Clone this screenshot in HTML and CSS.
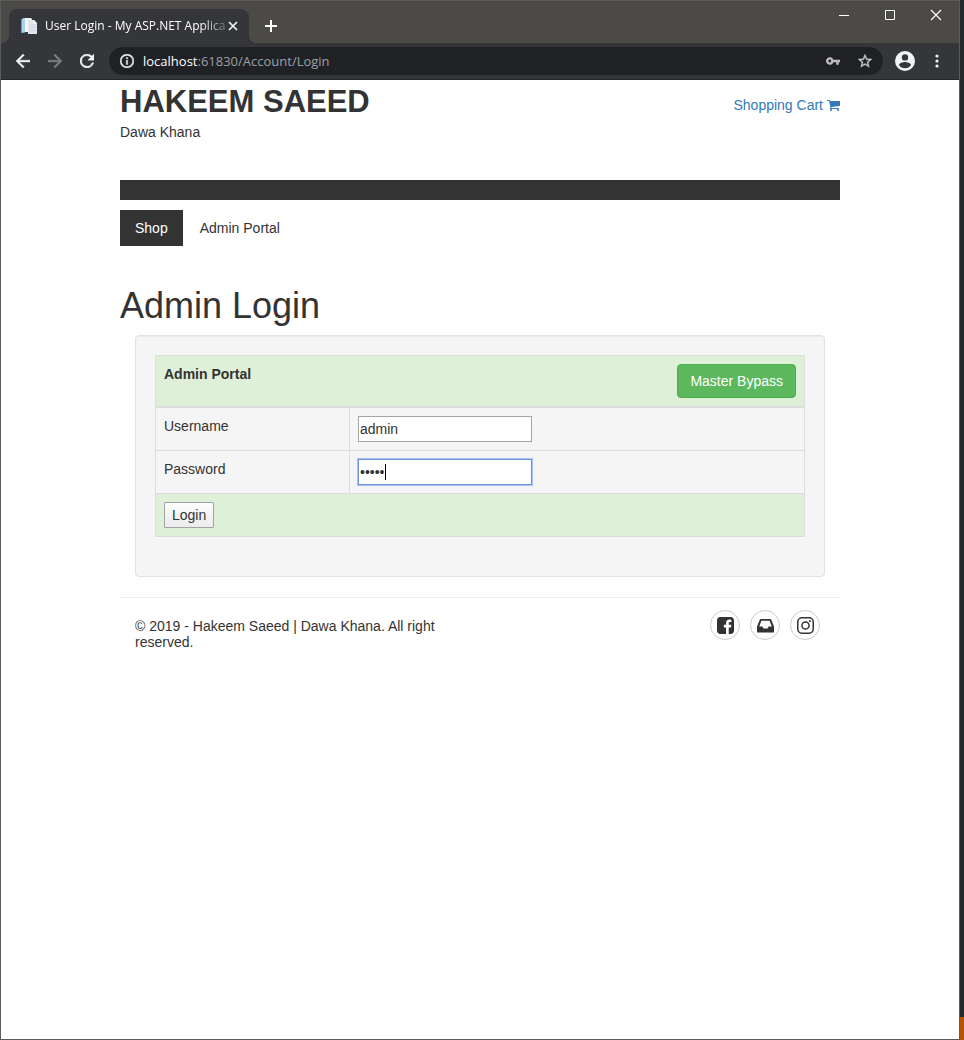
FILE: index.html
```html
<!DOCTYPE html>
<html lang="en">
<head>
<meta charset="utf-8">
<title>User Login - My ASP.NET Application</title>
<link rel="stylesheet" href="styles.css">
</head>
<body>
<div class="window">
  <div class="titlebar">
    <div class="tab">
      <svg class="favicon" viewBox="0 0 16 16" width="16" height="16"><path d="M2 0h8l1 1v13H2z" fill="#eef1f4"/><path d="M0 1l4-.6v14.2L0 15z" fill="#4f9bd3"/><path d="M1 1.200l3-.5V14.300l-3 .4z" fill="#a9d3ef"/><path d="M4 .5h3V14H4z" fill="#f4f6f8"/><path d="M7 2h6l3 3v11H7z" fill="#e2e6ec"/><path d="M12.500 2v3.500H16z" fill="#fff"/><path d="M8.500 7h6M8.500 9.500h6M8.500 12h6" stroke="#cdd3db"/></svg>
      <span class="tab-title">User Login - My ASP.NET Applica</span>
      <button class="plain tab-close" aria-label="Close tab"><svg viewBox="0 0 10 10" width="10" height="10"><path d="M1 1l8 8M9 1L1 9" stroke="#f1f3f4" stroke-width="1.700"/></svg></button>
    </div>
    <button class="plain new-tab" aria-label="New tab"><svg viewBox="0 0 12 12" width="12" height="12"><path d="M6 0v12M0 6h12" stroke="#fff" stroke-width="2"/></svg></button>
    <div class="window-controls">
      <button class="plain" aria-label="Minimize"><svg viewBox="0 0 12 12" width="12" height="12"><path d="M1 6.500h10" stroke="#fff"/></svg></button>
      <button class="plain" aria-label="Maximize"><svg viewBox="0 0 12 12" width="12" height="12"><path d="M1.500 1.500h9v9h-9z" fill="none" stroke="#fff"/></svg></button>
      <button class="plain" aria-label="Close"><svg viewBox="0 0 12 12" width="12" height="12"><path d="M1 1l10 10M11 1L1 11" stroke="#fff" stroke-width="1.200"/></svg></button>
    </div>
  </div>
  <div class="toolbar">
    <button class="plain" aria-label="Back"><svg viewBox="4 4 16 16" width="14" height="14"><path d="M20 11H7.830l5.590-5.590L12 4l-8 8 8 8 1.410-1.410L7.830 13H20z" fill="#f1f3f4" stroke="#f1f3f4" stroke-width=".5"/></svg></button>
    <button class="plain" aria-label="Forward"><svg viewBox="4 4 16 16" width="14" height="14"><path d="M12 4l-1.410 1.410L16.170 11H4v2h12.170l-5.580 5.590L12 20l8-8z" fill="#7d7f82" stroke="#7d7f82" stroke-width=".5"/></svg></button>
    <button class="plain" aria-label="Reload"><svg viewBox="4 4 16 16" width="14" height="14"><path d="M17.650 6.350A8 8 0 1 0 19.730 14h-2.080A6 6 0 1 1 12 6c1.660 0 3.140.690 4.220 1.780L13 11h7V4z" fill="#f1f3f4" stroke="#f1f3f4" stroke-width=".5"/></svg></button>
    <div class="omnibox">
      <svg viewBox="2 2 20 20" width="14" height="14"><path d="M11 7h2v2h-2zm0 4h2v6h-2zm1-9a10 10 0 1 0 0 20 10 10 0 0 0 0-20zm0 18a8 8 0 1 1 0-16 8 8 0 0 1 0 16z" fill="#e8eaed" stroke="#e8eaed" stroke-width=".6"/></svg>
      <span class="url"><span class="host">localhost</span>:61830/Account/Login</span>
      <button class="plain" aria-label="Saved password"><svg viewBox="1 6 22 12" width="14" height="8"><path d="M12.650 10A6 6 0 1 0 12.650 14H17v4h4v-4h2v-4zM7 14.200a2.200 2.200 0 1 1 0-4.400 2.200 2.200 0 0 1 0 4.400z" fill="#bdbdbd"/></svg></button>
      <button class="plain star" aria-label="Bookmark"><svg viewBox="2 2 20 20" width="14" height="14"><path d="M22 9.240l-7.190-.620L12 2 9.190 8.630 2 9.240l5.460 4.730L5.820 21 12 17.270 18.180 21l-1.630-7.030zM12 15.400l-3.760 2.270 1-4.280-3.320-2.880 4.380-.380L12 6.100l1.710 4.040 4.380.380-3.320 2.880 1 4.280z" fill="#c8cacc" stroke="#c8cacc" stroke-width=".5"/></svg></button>
    </div>
    <button class="plain avatar" aria-label="Profile"><svg viewBox="2 2 20 20" width="20" height="20"><path d="M12 2a10 10 0 1 0 0 20 10 10 0 0 0 0-20zm0 3.200a3.200 3.200 0 1 1 0 6.400 3.200 3.200 0 0 1 0-6.400zm0 14a7.200 7.200 0 0 1-6-3.220c.030-1.990 4-3.080 6-3.080s5.970 1.090 6 3.080a7.200 7.200 0 0 1-6 3.220z" fill="#f1f3f4"/></svg></button>
    <button class="plain" aria-label="Menu"><svg viewBox="0 0 4 14" width="4" height="14"><g fill="#f1f3f4"><circle cx="2" cy="2" r="1.600"/><circle cx="2" cy="7" r="1.600"/><circle cx="2" cy="12" r="1.600"/></g></svg></button>
  </div>

  <div class="page">
    <header class="site-header">
      <div>
        <div class="brand">HAKEEM SAEED</div>
        <div>Dawa Khana</div>
      </div>
      <a class="cart" href="#">Shopping Cart <svg viewBox="0 0 1664 1408" width="13" height="11"><path d="M640 1280a128 128 0 1 1-256 0 128 128 0 0 1 256 0zm896 0a128 128 0 1 1-256 0 128 128 0 0 1 256 0zm128-1088v512q0 24-16 42t-41 21L563 889q13 60 13 70 0 16-24 64h920q26 0 45 19t19 45-19 45-45 19H448q-26 0-45-19t-19-45q0-11 8-31t16-36 21-40 15-29L267 128H64q-26 0-45-19T0 64t19-45T64 0h256q16 0 28 6t20 16 12 24 8 26 5 29 5 27h1202q26 0 45 19t19 45z" fill="currentColor"/></svg></a>
    </header>
    <div class="bar"></div>
    <nav class="nav">
      <a class="active" href="#">Shop</a>
      <a href="#">Admin Portal</a>
    </nav>
    <h1>Admin Login</h1>
    <form class="well">
      <table>
        <thead>
          <tr><th colspan="2"><div class="head-row"><span>Admin Portal</span><button type="button" class="bypass">Master Bypass</button></div></th></tr>
        </thead>
        <tbody>
          <tr><td class="label"><label for="user">Username</label></td><td><input id="user" type="text" value="admin"></td></tr>
          <tr><td class="label"><label for="pass">Password</label></td><td><div class="field"><input id="pass" class="focused" type="password" value="admin"><span class="caret"></span></div></td></tr>
          <tr class="success"><td colspan="2"><button type="button" class="login">Login</button></td></tr>
        </tbody>
      </table>
    </form>
    <footer>
      <p>© 2019 - Hakeem Saeed | Dawa Khana. All right reserved.</p>
      <div class="social">
        <a href="#" aria-label="Facebook"><svg viewBox="0 0 1536 1536" width="17" height="17"><path d="M1248 0q119 0 203.500 84.500T1536 288v960q0 119-84.500 203.500T1248 1536h-188V941h199l30-232h-229V561q0-56 23.500-84t91.500-28l122-1V241q-63-9-178-9-136 0-217.500 80T820 538v171H620v232h200v595H288q-119 0-203.500-84.500T0 1248V288Q0 169 84.500 84.500T288 0z" fill="#333"/></svg></a>
        <a href="#" aria-label="Inbox"><svg viewBox="0 0 18 18" width="17" height="17"><path fill-rule="evenodd" d="M4 2h10q.8 0 1.100.8L18 10v5.500q0 1-1 1H1q-1 0-1-1V10l2.900-7.200Q3.200 2 4 2zm.7 2L2.400 10h3.300l1.100 2.200h4.400L12.300 10h3.300l-2.300-6z" fill="#333"/></svg></a>
        <a href="#" aria-label="Instagram"><svg viewBox="0 0 18 18" width="17" height="17"><rect x=".8" y=".8" width="16.400" height="16.400" rx="4.500" fill="none" stroke="#333" stroke-width="1.600"/><circle cx="9" cy="9" r="3.800" fill="none" stroke="#333" stroke-width="1.600"/><circle cx="13.700" cy="4.300" r="1.100" fill="#333"/></svg></a>
      </div>
    </footer>
  </div>
</div>
<div class="desktop"></div>
</body>
</html>
```
FILE: styles.css
```css
* { box-sizing: border-box; }
body {
  margin: 0;
  min-height: 100vh;
  display: grid;
  grid-template-columns: 1fr 4px;
  font: 14px/20px "Liberation Sans", Arial, sans-serif;
  color: #333;
}
.window { border: 1px solid #5b5b5b; background: #fff; }
.desktop { background: linear-gradient(to top, #b65200 23px, #26282a 23px); }
a { color: #333; text-decoration: none; }
svg { display: block; }
button, input { font: inherit; color: inherit; margin: 0; }
.plain {
  display: flex;
  align-items: center;
  justify-content: center;
  padding: 0;
  border: 0;
  background: none;
}

.titlebar {
  display: flex;
  height: 42px;
  padding: 8px 0 0 8px;
  background: #4b4a47;
}
.tab {
  position: relative;
  display: flex;
  align-items: center;
  width: 240px;
  padding: 0 11px 0 12px;
  border-radius: 8px 8px 0 0;
  background: #35363a;
  color: #fff;
  font: 12px/16px "Open Sans", sans-serif;
}
.tab::before, .tab::after {
  content: "";
  position: absolute;
  bottom: 0;
  width: 8px;
  height: 8px;
}
.tab::before { right: 100%; background: radial-gradient(circle at 0 0, transparent 8px, #35363a 8px); }
.tab::after { left: 100%; background: radial-gradient(circle at 100% 0, transparent 8px, #35363a 8px); }
.favicon { flex: none; margin-right: 8px; }
.tab-title {
  flex: 1;
  white-space: nowrap;
  mask-image: linear-gradient(to left, rgba(0, 0, 0, .2), #000 28px);
}
.new-tab { width: 28px; margin-left: 8px; }
.window-controls { display: flex; margin: -8px 0 0 auto; }
.window-controls button { width: 46px; height: 28px; }

.toolbar {
  display: flex;
  align-items: center;
  height: 37px;
  padding: 0 6px;
  border-bottom: 1px solid #26272a;
  background: #35363a;
}
.toolbar > .plain { width: 32px; height: 28px; }
.omnibox {
  flex: 1;
  display: flex;
  align-items: center;
  height: 28px;
  margin-left: 6px;
  padding: 0 11px;
  border-radius: 14px;
  background: #202124;
  color: #9aa0a6;
  font: 13px/18px "Open Sans", sans-serif;
}
.url { flex: 1; padding-left: 9px; }
.host { color: #fff; }
.star { margin-left: 18px; }
.toolbar > .avatar { margin-left: 6px; }

.page { padding: 5px 119px 0; }
.site-header { display: flex; justify-content: space-between; align-items: flex-start; }
.brand { margin-bottom: 3px; font-size: 31px; line-height: 34px; font-weight: bold; }
.cart { display: flex; align-items: center; gap: 4px; padding-top: 10px; color: #337ab7; }
.bar { height: 20px; margin: 38px 0 10px; background: #333; }
.nav { display: flex; gap: 2px; }
.nav a { padding: 8px 15px; }
.nav .active { background: #333; color: #fff; }
h1 { margin: 40px 0 9px; font-size: 36px; line-height: 40px; font-weight: normal; }

.well {
  margin: 0 15px 20px;
  padding: 19px;
  border: 1px solid #e3e3e3;
  border-radius: 4px;
  background: #f5f5f5;
  box-shadow: inset 0 1px 1px rgba(0, 0, 0, .05);
}
table { width: 100%; margin-bottom: 20px; border-collapse: collapse; }
th, td { padding: 8px; border: 1px solid #ddd; text-align: left; vertical-align: top; }
thead th { border-bottom-width: 2px; background: #dff0d8; }
.success td { background: #dff0d8; }
.label { width: 194px; }
.head-row { display: flex; justify-content: space-between; align-items: flex-start; }
.bypass {
  padding: 6px 12px;
  border: 1px solid #4cae4c;
  border-radius: 4px;
  background: #5cb85c;
  color: #fff;
  font-weight: normal;
}
input { display: block; width: 174px; height: 26px; padding: 2px 1px; border: 1px solid #a6a6a6; background: #fff; outline: 0; }
.focused { border-color: #6c92d8; box-shadow: 0 0 0 1px #a5c3f5; }
.field { position: relative; }
.caret { position: absolute; left: 27px; top: 5px; width: 1px; height: 16px; background: #000; }
.login {
  display: block;
  height: 26px;
  padding: 0 7px;
  border: 1px solid #a3a3a3;
  border-radius: 1px;
  background: linear-gradient(#fdfdfd, #ececec);
}

footer {
  display: flex;
  justify-content: space-between;
  align-items: flex-start;
  padding: 12px 20px 0 15px;
  border-top: 1px solid #eee;
}
footer p { width: 330px; margin: 8px 0 0; line-height: 16px; }
.social { display: flex; gap: 10px; }
.social a {
  display: flex;
  align-items: center;
  justify-content: center;
  width: 30px;
  height: 30px;
  border: 1px solid #ccc;
  border-radius: 50%;
}
```
